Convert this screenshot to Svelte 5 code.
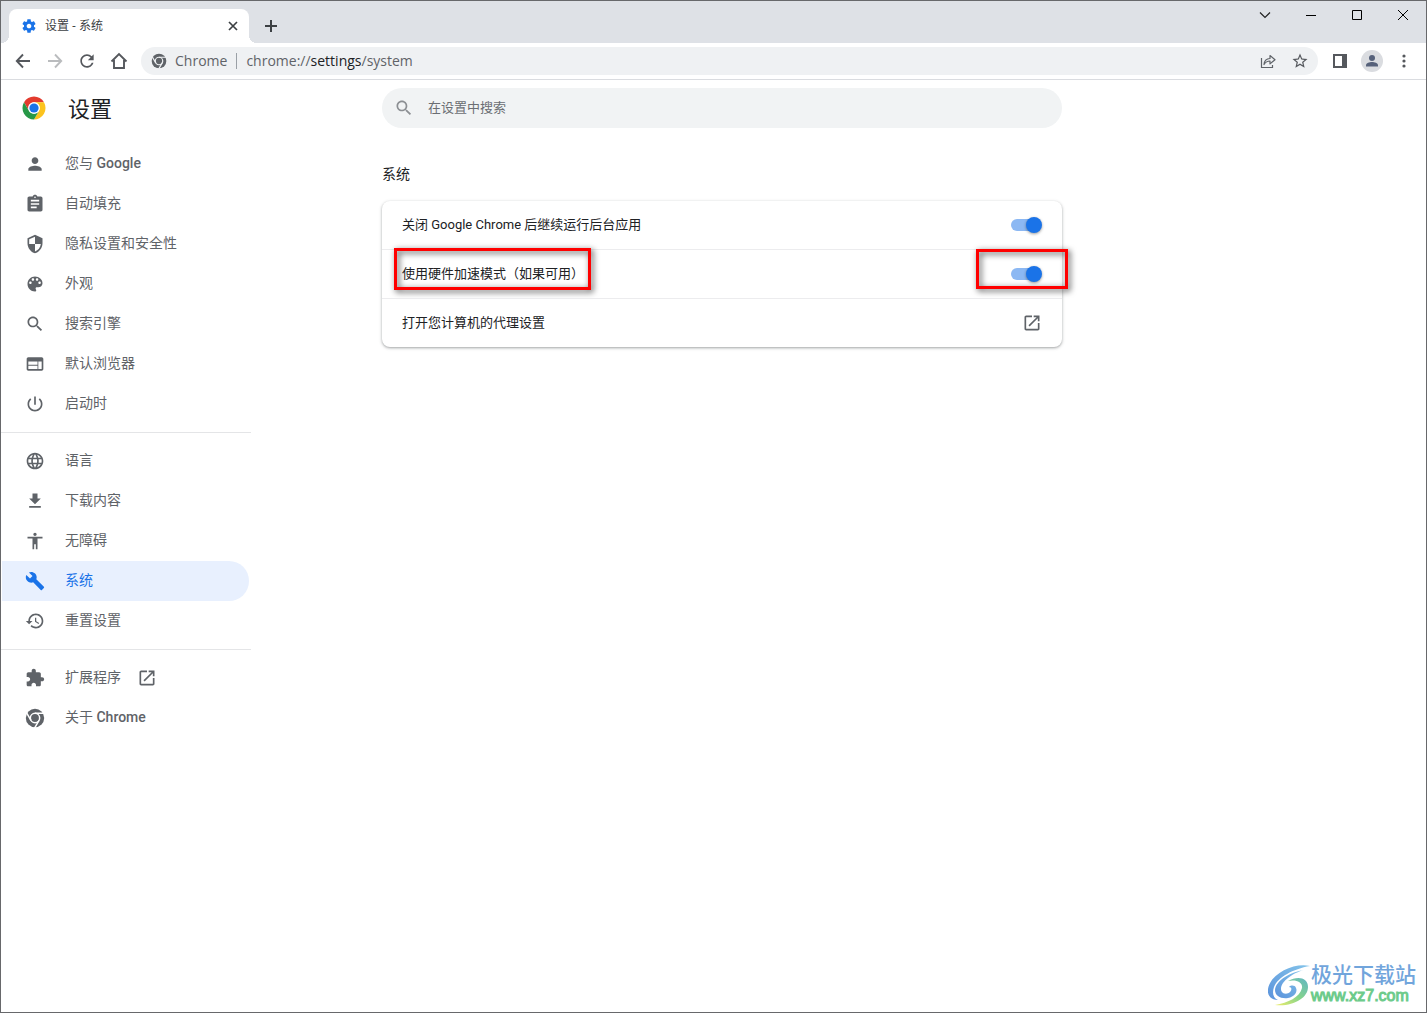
<script>
  const icons = {
    person: 'M12 12c2.21 0 4-1.79 4-4s-1.79-4-4-4-4 1.79-4 4 1.79 4 4 4zm0 2c-2.67 0-8 1.34-8 4v2h16v-2c0-2.66-5.33-4-8-4z',
    assignment: 'M19 3h-4.18C14.4 1.84 13.3 1 12 1c-1.3 0-2.4.84-2.82 2H5c-1.1 0-2 .9-2 2v14c0 1.1.9 2 2 2h14c1.1 0 2-.9 2-2V5c0-1.1-.9-2-2-2zm-7 0c.55 0 1 .45 1 1s-.45 1-1 1-1-.45-1-1 .45-1 1-1zm2 14H7v-2h7v2zm3-4H7v-2h10v2zm0-4H7V7h10v2z',
    security: 'M12 1L3 5v6c0 5.55 3.84 10.74 9 12 5.16-1.26 9-6.45 9-12V5l-9-4zm0 10.99h7c-.53 4.12-3.28 7.79-7 8.94V12H5V6.3l7-3.11v8.8z',
    palette: 'M12 3c-4.97 0-9 4.03-9 9s4.03 9 9 9c.83 0 1.5-.67 1.5-1.5 0-.39-.15-.74-.39-1.01-.23-.26-.38-.61-.38-.99 0-.83.67-1.5 1.5-1.5H16c2.76 0 5-2.24 5-5 0-4.42-4.03-8-9-8zm-5.5 9c-.83 0-1.5-.67-1.5-1.5S5.67 9 6.5 9 8 9.67 8 10.5 7.33 12 6.5 12zm3-4C8.67 8 8 7.33 8 6.5S8.67 5 9.5 5s1.5.67 1.5 1.5S10.33 8 9.5 8zm5 0c-.83 0-1.5-.67-1.5-1.5S13.67 5 14.5 5s1.5.67 1.5 1.5S15.33 8 14.5 8zm3 4c-.83 0-1.5-.67-1.5-1.5S16.67 9 17.5 9s1.5.67 1.5 1.5-.67 1.5-1.5 1.5z',
    search: 'M15.5 14h-.79l-.28-.27C15.41 12.59 16 11.11 16 9.5 16 5.91 13.09 3 9.5 3S3 5.91 3 9.5 5.91 16 9.5 16c1.61 0 3.09-.59 4.23-1.57l.27.28v.79l5 4.99L20.49 19l-4.99-5zm-6 0C7.01 14 5 11.99 5 9.5S7.01 5 9.5 5 14 7.01 14 9.5 11.99 14 9.5 14z',
    web: 'M20 4H4c-1.1 0-1.99.9-1.99 2L2 18c0 1.1.9 2 2 2h16c1.1 0 2-.9 2-2V6c0-1.1-.9-2-2-2zm-5 14H4v-4h11v4zm0-5H4V9h11v4zm5 5h-4V9h4v9z',
    power: 'M13 3h-2v10h2V3zm4.83 2.17l-1.42 1.42C17.99 7.86 19 9.81 19 12c0 3.87-3.13 7-7 7s-7-3.13-7-7c0-2.19 1.01-4.14 2.58-5.42L6.17 5.17C4.23 6.82 3 9.26 3 12c0 4.97 4.03 9 9 9s9-4.03 9-9c0-2.74-1.23-5.18-3.17-6.83z',
    language: 'M11.99 2C6.47 2 2 6.48 2 12s4.47 10 9.99 10C17.52 22 22 17.52 22 12S17.52 2 11.99 2zm6.93 6h-2.95c-.32-1.25-.78-2.45-1.38-3.56 1.84.63 3.37 1.91 4.33 3.56zM12 4.04c.83 1.2 1.48 2.53 1.91 3.96h-3.82c.43-1.43 1.08-2.76 1.91-3.96zM4.26 14C4.1 13.36 4 12.69 4 12s.1-1.36.26-2h3.38c-.08.66-.14 1.32-.14 2s.06 1.34.14 2H4.26zm.82 2h2.95c.32 1.25.78 2.45 1.38 3.56-1.84-.63-3.37-1.9-4.33-3.56zm2.95-8H5.08c.96-1.66 2.49-2.93 4.33-3.56C8.81 5.55 8.35 6.75 8.03 8zM12 19.96c-.83-1.2-1.48-2.53-1.91-3.96h3.82c-.43 1.43-1.08 2.76-1.91 3.96zM14.34 14H9.66c-.09-.66-.16-1.32-.16-2s.07-1.35.16-2h4.68c.09.65.16 1.32.16 2s-.07 1.34-.16 2zm.25 5.56c.6-1.11 1.06-2.31 1.38-3.56h2.95c-.96 1.65-2.49 2.93-4.33 3.56zM16.36 14c.08-.66.14-1.32.14-2s-.06-1.34-.14-2h3.38c.16.64.26 1.31.26 2s-.1 1.36-.26 2h-3.38z',
    download: 'M19 9h-4V3H9v6H5l7 7 7-7zM5 18v2h14v-2H5z',
    accessibility: 'M12 2c1.1 0 2 .9 2 2s-.9 2-2 2-2-.9-2-2 .9-2 2-2zm9 7h-6v13h-2v-6h-2v6H9V9H3V7h18v2z',
    build: 'M22.7 19l-9.1-9.1c.9-2.3.4-5-1.5-6.9-2-2-5-2.4-7.4-1.3L9 6 6 9 1.6 4.7C.4 7.1.9 10.1 2.9 12.1c1.9 1.9 4.6 2.4 6.9 1.5l9.1 9.1c.4.4 1 .4 1.4 0l2.3-2.3c.5-.4.5-1.1.1-1.4z',
    restore: 'M13 3c-4.97 0-9 4.03-9 9H1l3.89 3.89.07.14L9 12H6c0-3.87 3.13-7 7-7s7 3.13 7 7-3.13 7-7 7c-1.93 0-3.68-.79-4.94-2.06l-1.42 1.42C8.27 19.99 10.51 21 13 21c4.97 0 9-4.03 9-9s-4.03-9-9-9zm-1 5v5l4.28 2.54.72-1.21-3.5-2.08V8H12z',
    extension: 'M20.5 11H19V7c0-1.1-.9-2-2-2h-4V3.5C13 2.12 11.88 1 10.5 1S8 2.12 8 3.5V5H4c-1.1 0-1.99.9-1.99 2v3.8H3.5c1.49 0 2.7 1.21 2.7 2.7s-1.21 2.7-2.7 2.7H2V20c0 1.1.9 2 2 2h3.8v-1.5c0-1.49 1.21-2.7 2.7-2.7 1.49 0 2.7 1.21 2.7 2.7V22H17c1.1 0 2-.9 2-2v-4h1.5c1.38 0 2.5-1.12 2.5-2.5S21.88 11 20.5 11z',
    launch: 'M19 19H5V5h7V3H5c-1.11 0-2 .9-2 2v14c0 1.1.89 2 2 2h14c1.1 0 2-.9 2-2v-7h-2v7zM14 3v2h3.59l-9.83 9.83 1.41 1.41L19 6.41V10h2V3h-7z',
    settings: 'M19.43 12.98c.04-.32.07-.64.07-.98s-.03-.66-.07-.98l2.11-1.65c.19-.15.24-.42.12-.64l-2-3.46c-.12-.22-.39-.3-.61-.22l-2.49 1c-.52-.4-1.08-.73-1.69-.98l-.38-2.65C14.46 2.18 14.25 2 14 2h-4c-.25 0-.46.18-.49.42l-.38 2.65c-.61.25-1.17.59-1.69.98l-2.49-1c-.23-.09-.49 0-.61.22l-2 3.46c-.13.22-.07.49.12.64l2.11 1.65c-.04.32-.07.65-.07.98s.03.66.07.98l-2.11 1.65c-.19.15-.24.42-.12.64l2 3.46c.12.22.39.3.61.22l2.49-1c.52.4 1.08.73 1.69.98l.38 2.65c.03.24.24.42.49.42h4c.25 0 .46-.18.49-.42l.38-2.65c.61-.25 1.17-.59 1.69-.98l2.49 1c.23.09.49 0 .61-.22l2-3.46c.12-.22.07-.49-.12-.64l-2.11-1.65zM12 15.5c-1.93 0-3.5-1.57-3.5-3.5s1.57-3.5 3.5-3.5 3.5 1.57 3.5 3.5-1.57 3.5-3.5 3.5z',
    star: 'M22 9.24l-7.19-.62L12 2 9.19 8.63 2 9.24l5.46 4.73L5.82 21 12 17.27 18.18 21l-1.63-7.03L22 9.24zM12 15.4l-3.76 2.27 1-4.28-3.32-2.88 4.38-.38L12 6.1l1.71 4.04 4.38.38-3.32 2.88 1 4.28L12 15.4z',
    reload: 'M17.65 6.35C16.2 4.9 14.21 4 12 4c-4.42 0-7.99 3.58-7.99 8s3.57 8 7.99 8c3.73 0 6.84-2.55 7.73-6h-2.08c-.82 2.33-3.04 4-5.65 4-3.31 0-6-2.69-6-6s2.69-6 6-6c1.66 0 3.14.69 4.22 1.78L13 11h7V4l-2.35 2.35z'
  };

  const groups = [
    [
      { icon: 'person', text: '您与', latin: 'Google' },
      { icon: 'assignment', text: '自动填充' },
      { icon: 'security', text: '隐私设置和安全性' },
      { icon: 'palette', text: '外观' },
      { icon: 'search', text: '搜索引擎' },
      { icon: 'web', text: '默认浏览器' },
      { icon: 'power', text: '启动时' }
    ],
    [
      { icon: 'language', text: '语言' },
      { icon: 'download', text: '下载内容' },
      { icon: 'accessibility', text: '无障碍' },
      { icon: 'build', text: '系统', selected: true },
      { icon: 'restore', text: '重置设置' }
    ],
    [
      { icon: 'extension', text: '扩展程序', external: true },
      { icon: 'chrome', text: '关于', latin: 'Chrome' }
    ]
  ];

  let background = $state(true);
  let hardware = $state(true);
  let query = $state('');
</script>

{#snippet glyph(name)}
  {#if name === 'chrome'}
    <svg class="icon" viewBox="0 0 24 24" aria-hidden="true">
      <circle cx="12" cy="12" r="11" fill="currentColor" />
      <g class="cut">
        <circle cx="12" cy="12" r="5.6" />
        <path d="M12 6.4H23M16.85 14.8L11.3 24.4M7.15 14.8L1.6 5.2" />
      </g>
    </svg>
  {:else}
    <svg class="icon" viewBox="0 0 24 24" aria-hidden="true"><path fill="currentColor" d={icons[name]} /></svg>
  {/if}
{/snippet}

<div class="window">
  <header class="strip">
    <div class="tab">
      <span class="favicon">{@render glyph('settings')}</span>
      <span class="tab-title">设置 - 系统</span>
      <button class="plain tab-close" aria-label="关闭标签页">
        <svg width="10" height="10" viewBox="0 0 10 10"><path d="M1 1l8 8M9 1l-8 8" stroke="#3c4043" stroke-width="1.7" /></svg>
      </button>
    </div>
    <button class="plain new-tab" aria-label="新标签页">
      <svg width="12" height="12" viewBox="0 0 12 12"><path d="M6 0v12M0 6h12" stroke="#3c4043" stroke-width="2" /></svg>
    </button>
    <div class="controls">
      <button class="plain" aria-label="搜索标签页">
        <svg width="12" height="12" viewBox="0 0 12 12"><path d="M1 3.5l5 5 5-5" fill="none" stroke="#222" stroke-width="1.2" /></svg>
      </button>
      <button class="plain" aria-label="最小化">
        <svg width="12" height="12" viewBox="0 0 12 12"><path d="M1 6.5h10" stroke="#000" /></svg>
      </button>
      <button class="plain" aria-label="最大化">
        <svg width="12" height="12" viewBox="0 0 12 12"><path d="M1.5 1.5h9v9h-9z" fill="none" stroke="#000" /></svg>
      </button>
      <button class="plain" aria-label="关闭">
        <svg width="12" height="12" viewBox="0 0 12 12"><path d="M1 1l10 10M11 1L1 11" stroke="#000" /></svg>
      </button>
    </div>
  </header>

  <div class="toolbar">
    <button class="plain tool" aria-label="后退">
      <svg width="16" height="16" viewBox="0 0 16 16"><path d="M15 8H2M8 1.5L1.8 8 8 14.5" fill="none" stroke="#55585d" stroke-width="1.9" /></svg>
    </button>
    <button class="plain tool" aria-label="前进" disabled>
      <svg width="16" height="16" viewBox="0 0 16 16"><path d="M1 8h13M8 1.5L14.2 8 8 14.5" fill="none" stroke="#babcbe" stroke-width="1.9" /></svg>
    </button>
    <button class="plain tool reload" aria-label="重新加载">{@render glyph('reload')}</button>
    <button class="plain tool" aria-label="主页">
      <svg width="18" height="18" viewBox="0 0 18 18"><path d="M1.5 9.5L9 2l7.5 7.5M4 8v8h10V8" fill="none" stroke="#55585d" stroke-width="1.9" /></svg>
    </button>
    <div class="omnibox">
      <span class="site">{@render glyph('chrome')}</span>
      <span class="site-name">Chrome</span>
      <span class="url">chrome://<em>settings</em>/system</span>
      <button class="plain tool" aria-label="分享">
        <svg width="16" height="16" viewBox="0 0 16 16"><path d="M1.5 5v9.500h11V12" fill="none" stroke="#5f6368" stroke-width="1.2" /><path d="M4 11.500c.3-4 2.600-5.800 6-6V2.500l5 4.200-5 4.200V8C7.500 8 5.500 9.100 4 11.500z" fill="none" stroke="#5f6368" stroke-width="1.2" stroke-linejoin="round" /></svg>
      </button>
      <button class="plain tool star" aria-label="为此标签页添加书签">{@render glyph('star')}</button>
    </div>
    <button class="plain tool" aria-label="侧边栏">
      <svg width="14" height="14" viewBox="0 0 14 14"><path d="M1 1h12v12H1z" fill="none" stroke="#55585d" stroke-width="2" /><path d="M9 0h5v14H9z" fill="#55585d" /></svg>
    </button>
    <button class="plain tool" aria-label="个人资料">
      <svg width="22" height="22" viewBox="0 0 22 22"><circle cx="11" cy="11" r="11" fill="#dadce0" /><circle cx="11" cy="8" r="3" fill="#56617a" /><path d="M5 16.5v-1.200C5 13 8.500 12 11 12s6 1 6 3.300v1.200z" fill="#56617a" /></svg>
    </button>
    <button class="plain tool" aria-label="自定义及控制">
      <svg width="4" height="14" viewBox="0 0 4 14" fill="#55585d"><circle cx="2" cy="2" r="1.6" /><circle cx="2" cy="7" r="1.6" /><circle cx="2" cy="12" r="1.6" /></svg>
    </button>
  </div>

  <div class="page">
    <aside>
      <div class="brand">
        <svg width="24" height="24" viewBox="-0.5 -0.5 25 25" aria-hidden="true">
          <path fill="#e33b2e" d="M1.608 6A12 12 0 0 1 22.392 6H12A6 6 0 0 0 6.804 15z" />
          <path fill="#fcc31e" d="M22.392 6A12 12 0 0 1 12 24L17.196 15A6 6 0 0 0 12 6z" />
          <path fill="#279847" d="M12 24A12 12 0 0 1 1.608 6L6.804 15A6 6 0 0 0 17.196 15z" />
          <circle cx="12" cy="12" r="6" fill="#fff" />
          <circle cx="12" cy="12" r="4.8" fill="#1a73e8" />
        </svg>
        <h1>设置</h1>
      </div>
      <nav>
        {#each groups as group}
          <div class="group">
            {#each group as item}
              <a href="#{item.icon}" class:selected={item.selected}>
                {@render glyph(item.icon)}
                <span>{item.text}{#if item.latin}&nbsp;<b>{item.latin}</b>{/if}</span>
                {#if item.external}{@render glyph('launch')}{/if}
              </a>
            {/each}
          </div>
        {/each}
      </nav>
    </aside>

    <main>
      <label class="search">
        {@render glyph('search')}
        <input type="search" aria-label="在设置中搜索" placeholder="在设置中搜索" bind:value={query} />
      </label>
      <h2>系统</h2>
      <section class="card">
        <div class="row">
          <label for="background">关闭 Google Chrome 后继续运行后台应用</label>
          <input class="toggle" id="background" type="checkbox" bind:checked={background} />
        </div>
        <div class="row">
          <label for="hardware">使用硬件加速模式（如果可用）</label>
          <input class="toggle" id="hardware" type="checkbox" bind:checked={hardware} />
          <span class="mark mark-label"></span>
          <span class="mark mark-toggle"></span>
        </div>
        <a class="row" href="#proxy">
          <span>打开您计算机的代理设置</span>
          {@render glyph('launch')}
        </a>
      </section>
    </main>
  </div>

  <div class="watermark">
    <svg width="43" height="42" viewBox="0 0 43 42" aria-hidden="true">
      <defs>
        <linearGradient id="sky" x1="0" y1="1" x2="1" y2="0"><stop offset="0" stop-color="#5b93dc" /><stop offset="1" stop-color="#84c4ea" /></linearGradient>
        <linearGradient id="leaf" x1="0" y1="1" x2="1" y2="0"><stop offset="0" stop-color="#f0ee6a" /><stop offset=".5" stop-color="#86d48a" /><stop offset="1" stop-color="#5fb6c4" /></linearGradient>
      </defs>
      <path fill="url(#sky)" d="M42 2C26-2 2 10 0 25c-1 7 4 11 10 11C5 34 4 29 6 23 10 13 25 5 42 2z" />
      <path fill="url(#sky)" d="M36 6C23 8 8 16 7 26c0 6 6 9 13 8 6-1 10-6 8-10-1-3-5-3-7-1 3 0 3 3 1 5-3 3-9 2-9-3C13 17 25 9 36 6z" />
      <path fill="url(#leaf)" d="M20 17c9-5 20-4 20 6 0 11-15 20-33 18 13-2 25-8 27-17 1-6-6-9-14-7z" />
    </svg>
    <div><strong>极光下载站</strong><span>www.xz7.com</span></div>
  </div>
</div>

<style>
  :global(body) {
    margin: 0;
  }

  .window {
    position: relative;
    box-sizing: border-box;
    min-height: 100vh;
    border: 1px solid #67686b;
    background: #fff;
    color: #202124;
    font: 13px/20px Roboto, "Noto Sans CJK SC", sans-serif;
  }

  .icon {
    display: block;
    flex: none;
    width: 20px;
    height: 20px;
  }

  .cut {
    fill: none;
    stroke: var(--behind, #fff);
    stroke-width: 1.8;
  }

  .plain {
    display: flex;
    align-items: center;
    justify-content: center;
    flex: none;
    padding: 0;
    border: 0;
    background: none;
  }

  .strip {
    display: flex;
    height: 42px;
    background: #dee1e6;
  }

  .tab {
    position: relative;
    display: flex;
    align-items: center;
    box-sizing: border-box;
    width: 240px;
    height: 34px;
    margin: 8px 0 0 8px;
    padding: 0 8px 0 12px;
    border-radius: 8px 8px 0 0;
    background: #fff;
    font: 12px/20px "Open Sans", "Noto Sans CJK SC", sans-serif;
  }

  .tab::before,
  .tab::after {
    content: "";
    position: absolute;
    bottom: 0;
    width: 8px;
    height: 8px;
  }

  .tab::before {
    right: 100%;
    background: radial-gradient(circle at 0 0, transparent 8px, #fff 8px);
  }

  .tab::after {
    left: 100%;
    background: radial-gradient(circle at 100% 0, transparent 8px, #fff 8px);
  }

  .favicon {
    color: #1a73e8;
  }

  .favicon .icon {
    width: 16px;
    height: 16px;
  }

  .tab-title {
    flex: 1;
    margin-left: 8px;
    color: #3c4043;
  }

  .tab-close {
    width: 16px;
    height: 16px;
  }

  .new-tab {
    width: 28px;
    height: 28px;
    margin: 11px 0 0 8px;
  }

  .controls {
    display: flex;
    margin-left: auto;
  }

  .controls .plain {
    width: 46px;
    height: 28px;
  }

  .toolbar {
    display: flex;
    align-items: center;
    height: 36px;
    padding: 0 6px;
    border-bottom: 1px solid #dadce0;
  }

  .tool {
    width: 32px;
    height: 28px;
    color: #55585d;
  }

  .star .icon {
    width: 18px;
    height: 18px;
  }

  .omnibox {
    --behind: #eff1f3;
    display: flex;
    align-items: center;
    flex: 1;
    height: 28px;
    margin: 0 6px;
    padding: 0 2px 0 10px;
    border-radius: 14px;
    background: #eff1f3;
    color: #5f6368;
    font: 14px/20px "Open Sans", sans-serif;
  }

  .site .icon {
    width: 16px;
    height: 16px;
  }

  .site-name {
    margin: 0 9px 0 8px;
  }

  .url {
    flex: 1;
    display: flex;
    align-items: center;
  }

  .url::before {
    content: "";
    width: 1px;
    height: 16px;
    margin-right: 9px;
    background: #9aa0a6;
  }

  .url em {
    color: #202124;
    font-style: normal;
  }

  .page {
    display: grid;
    grid-template-columns: minmax(250px, 1fr) 17px minmax(0, 680px) minmax(0, 1fr);
  }

  aside {
    width: 250px;
  }

  .brand {
    display: flex;
    align-items: center;
    gap: 22px;
    height: 56px;
    padding-left: 21px;
  }

  h1 {
    margin: 0;
    padding-top: 4px;
    font-size: 22px;
    font-weight: 400;
    line-height: 32px;
  }

  .group {
    padding: 8px 2px 8px 1px;
  }

  .group + .group {
    border-top: 1px solid #e4e5e7;
  }

  nav a {
    display: flex;
    align-items: center;
    height: 40px;
    padding-left: 23px;
    border-radius: 0 20px 20px 0;
    color: #5f6368;
    font-size: 14px;
    text-decoration: none;
  }

  nav a span {
    margin: 0 16px 0 20px;
    padding-bottom: 2px;
  }

  nav b {
    font-weight: 500;
  }

  nav a.selected {
    background: #e8f0fe;
    color: #1a73e8;
  }

  main {
    grid-column: 3;
    padding-top: 8px;
  }

  .search {
    display: flex;
    align-items: center;
    height: 40px;
    padding: 0 12px;
    border-radius: 20px;
    background: #f1f3f4;
    color: #8c8f93;
  }

  .search input {
    flex: 1;
    min-width: 0;
    margin-left: 14px;
    padding: 0;
    border: 0;
    outline: 0;
    background: none;
    color: #202124;
    font: inherit;
  }

  .search input::placeholder {
    color: #6b6e73;
  }

  h2 {
    margin: 36px 0 17px;
    font-size: 14px;
    font-weight: 400;
    line-height: 20px;
  }

  .card {
    border-radius: 8px;
    background: #fff;
    box-shadow: 0 1px 2px rgb(60 64 67 / 30%), 0 1px 3px 1px rgb(60 64 67 / 15%);
  }

  .row {
    position: relative;
    display: flex;
    align-items: center;
    justify-content: space-between;
    height: 48px;
    padding: 0 20px;
    color: #202124;
    text-decoration: none;
  }

  .row + .row {
    border-top: 1px solid #ececee;
  }

  .row .icon {
    color: #5f6368;
  }

  .toggle {
    appearance: none;
    display: grid;
    align-items: center;
    width: 31px;
    height: 16px;
    margin: 0;
  }

  .toggle::before,
  .toggle::after {
    content: "";
    grid-area: 1 / 1;
    height: 12px;
    border-radius: 8px;
    background: #bdc1c6;
  }

  .toggle::before {
    width: 28px;
  }

  .toggle::after {
    width: 16px;
    height: 16px;
    background: #fff;
    box-shadow: 0 1px 3px rgb(0 0 0 / 40%);
  }

  .toggle:checked::before {
    background: #8cb8f3;
  }

  .toggle:checked::after {
    justify-self: end;
    background: #1a73e8;
  }

  .mark {
    position: absolute;
    box-sizing: border-box;
    border: 3px solid #f00;
    filter: drop-shadow(2px 2px 3px rgb(0 0 0 / 75%));
    pointer-events: none;
  }

  .mark-label {
    top: -2px;
    left: 12px;
    width: 197px;
    height: 42px;
  }

  .mark-toggle {
    top: -1px;
    right: -6px;
    width: 92px;
    height: 40px;
  }

  .watermark {
    position: absolute;
    right: 10px;
    bottom: 6px;
    display: flex;
    align-items: center;
  }

  .watermark div {
    display: grid;
  }

  .watermark strong {
    color: #71a5dc;
    font-size: 21px;
    font-weight: 500;
    line-height: 22px;
  }

  .watermark span {
    color: #6dcb8b;
    font: 16px/20px "Liberation Sans", sans-serif;
    -webkit-text-stroke: 1px #6dcb8b;
  }
</style>
